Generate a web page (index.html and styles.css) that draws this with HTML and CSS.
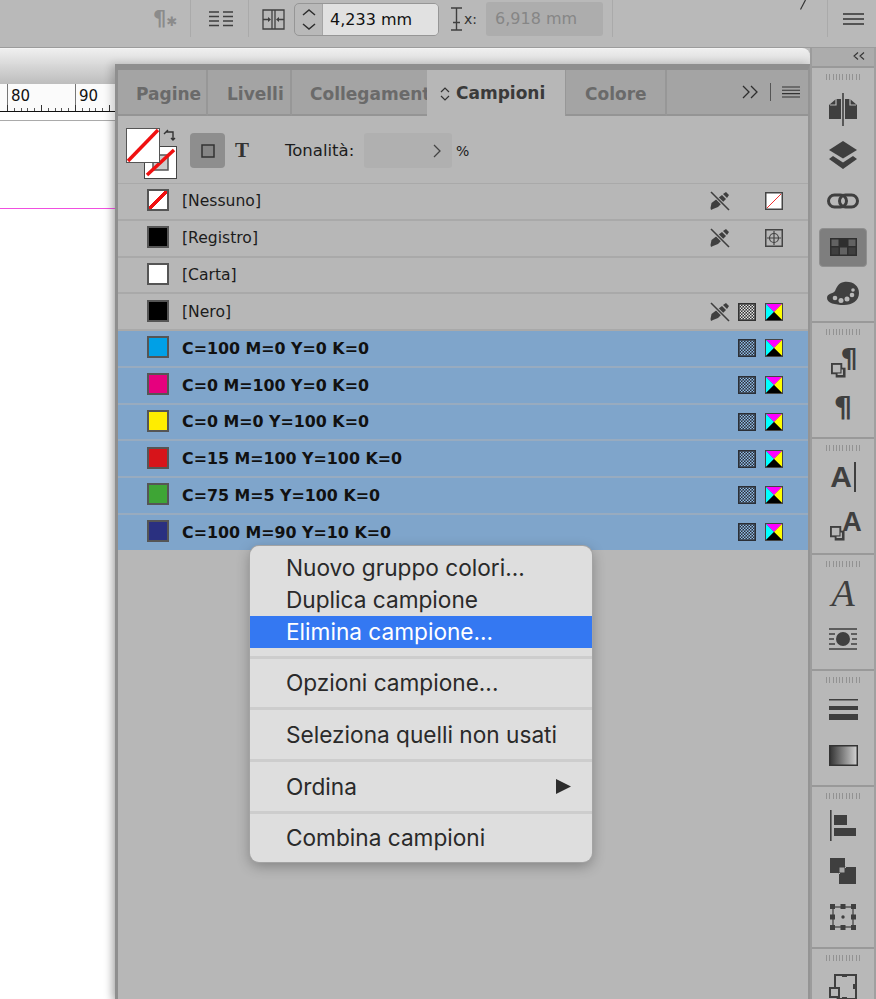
FILE: index.html
```html
<!DOCTYPE html>
<html lang="it">
<head>
  <meta charset="UTF-8" />
  <meta name="viewport" content="width=device-width, initial-scale=1" />
  <title>Campioni</title>
  <link rel="stylesheet" href="styles.css">
</head>
<body>
  <svg class="defs" width="0" height="0">
    <defs>
      <pattern id="dots" width="3" height="3" patternUnits="userSpaceOnUse">
        <rect x="0" y="0" width="1.5" height="1.5" fill="#e6e6e6" />
        <rect x="1.5" y="1.5" width="1.5" height="1.5" fill="#e6e6e6" />
      </pattern>
      <pattern id="dots-sel" width="3" height="3" patternUnits="userSpaceOnUse">
        <rect x="0" y="0" width="1.5" height="1.5" fill="#8fbce8" />
        <rect x="1.5" y="1.5" width="1.5" height="1.5" fill="#8fbce8" />
      </pattern>
      <symbol id="no-edit" viewBox="0 0 20 20">
        <path d="M13 3l3-2 3 3-2 3zM12 4l4 4-8 8-5 2-2 1-.5-2 1-5z" fill="#3f3f3f" />
        <path d="M1 1l18 18" stroke="#b8b8b8" stroke-width="3.4" />
        <path d="M1 1l18 18" stroke="#3f3f3f" stroke-width="1.6" />
      </symbol>
      <symbol id="grid" viewBox="0 0 18 18">
        <rect width="18" height="18" fill="#333" />
        <rect x="1.5" y="1.5" width="15" height="15" fill="url(#dots)" />
      </symbol>
      <symbol id="grid-sel" viewBox="0 0 18 18">
        <rect width="18" height="18" fill="#2b2f36" />
        <rect x="1.5" y="1.5" width="15" height="15" fill="url(#dots-sel)" />
      </symbol>
      <symbol id="cmyk" viewBox="0 0 18 18">
        <rect width="18" height="18" fill="#444" />
        <path d="M1 1h16L9 9z" fill="#f0f" />
        <path d="M1 1v16l8-8z" fill="#0ff" />
        <path d="M17 1v16L9 9z" fill="#ff0" />
        <path d="M1 17h16L9 9z" fill="#000" />
      </symbol>
      <symbol id="overlap" viewBox="0 0 16 16">
        <rect x="5" y="5" width="10.5" height="10.5" fill="#3f3f3f" />
        <rect x="1" y="1" width="10" height="10" fill="#b8b8b8" stroke="#3f3f3f" stroke-width="2" />
        <path d="M12 7v5H7" fill="none" stroke="#b8b8b8" stroke-width="1.5" />
      </symbol>
    </defs>
  </svg>

  <header class="topbar">
    <span class="para-off">¶<i>✱</i></span>
    <span class="sep sep-a"></span>
    <svg class="bar-lines" width="24" height="16" viewBox="0 0 24 16"><path d="M0 1h10M0 5.5h10M0 10h10M0 14.5h10M14 1h10M14 5.5h10M14 10h10M14 14.5h10" stroke="#3f3f3f" stroke-width="1.3" /></svg>
    <span class="sep sep-b"></span>
    <svg class="bar-cols" width="23" height="21" viewBox="0 0 23 21"><path d="M1 1h21v19H1zM10 1v19M13 1v19M1 10.5h6M22 10.5h-6" fill="none" stroke="#3f3f3f" stroke-width="1.3" /><path d="M9 10.5l-3-2.5v5zM14 10.5l3-2.5v5z" fill="#3f3f3f" /></svg>
    <div class="stepper">
      <span class="arrows">
        <svg width="14" height="9" viewBox="0 0 14 9"><path d="M1 7l6-5 6 5" fill="none" stroke="#2e2e2e" stroke-width="1.5" /></svg>
        <svg width="14" height="9" viewBox="0 0 14 9"><path d="M1 2l6 5 6-5" fill="none" stroke="#2e2e2e" stroke-width="1.5" /></svg>
      </span>
      <span class="value">4,233 mm</span>
    </div>
    <svg class="bar-cursor" width="13" height="24" viewBox="0 0 13 24"><path d="M1 1h11M1 23h11M6.5 1v22M3 15.5h7" fill="none" stroke="#3f3f3f" stroke-width="1.4" /></svg>
    <span class="x-label">x:</span>
    <span class="field-off">6,918 mm</span>
    <span class="sep sep-c"></span>
    <svg class="bar-slash" width="6" height="10" viewBox="0 0 6 10"><path d="M5.5 0L.5 9.5" stroke="#333" stroke-width="1.2" /></svg>
    <span class="sep sep-d"></span>
    <svg class="bar-menu" width="21" height="12" viewBox="0 0 21 12"><path d="M0 1h21M0 6h21M0 11h21" stroke="#333" stroke-width="1.4" /></svg>
  </header>

  <div class="workspace">
    <main class="canvas">
      <div class="doc-tab"></div>
      <div class="canvas-row">
        <section class="doc">
          <div class="doc-head"></div>
          <div class="ruler"><span>80</span><span>90</span></div>
          <div class="page-gap"></div>
          <div class="page"><div class="guide"></div></div>
        </section>

        <section class="panel">
          <nav class="tabs">
            <span class="tab tab-pagine">Pagine</span>
            <span class="tab tab-livelli">Livelli</span>
            <span class="tab tab-link">Collegamenti</span>
            <span class="tab tab-active">
              <svg width="10" height="14" viewBox="0 0 10 14"><path d="M1 5l4-4 4 4M1 9l4 4 4-4" fill="none" stroke="#333" stroke-width="1.2" /></svg>
              Campioni
            </span>
            <span class="tab tab-colore">Colore</span>
            <span class="tab-rest">
              <svg width="16" height="14" viewBox="0 0 16 14"><path d="M1 1l6 6-6 6M9 1l6 6-6 6" fill="none" stroke="#2e2e2e" stroke-width="1.3" /></svg>
              <span class="tab-rule"></span>
              <svg width="18" height="12" viewBox="0 0 18 12"><path d="M0 1h18M0 4.3h18M0 7.6h18M0 11h18" stroke="#333" stroke-width="1.1" /></svg>
            </span>
          </nav>

          <div class="controls">
            <svg class="fill-stroke" width="52" height="52" viewBox="0 0 52 52">
              <rect x="18.5" y="18.5" width="32" height="32" fill="#fff" stroke="#444" />
              <rect x="27" y="27" width="15" height="15" fill="#ccc" stroke="#555" stroke-width="1.5" />
              <path d="M21 47l27-25" stroke="#f01010" stroke-width="3.5" />
              <rect x=".5" y=".5" width="33" height="34" fill="#fff" stroke="#555" />
              <path d="M2 33L32 2" stroke="#f01010" stroke-width="3.5" />
              <path d="M40 4h7v8M38 6l2-2 2-2M45 10l2 2 2-2" fill="none" stroke="#333" stroke-width="1.4" />
            </svg>
            <span class="target"><svg width="14" height="14" viewBox="0 0 14 14"><rect x="1" y="1" width="12" height="12" fill="#858585" stroke="#333" stroke-width="1.5" /></svg></span>
            <span class="target-text">T</span>
            <label class="tint-label">Tonalità:</label>
            <span class="tint-field"><svg width="8" height="14" viewBox="0 0 8 14"><path d="M1 1l6 6-6 6" fill="none" stroke="#444" stroke-width="1.3" /></svg></span>
            <span class="percent">%</span>
          </div>

          <ul class="swatches">
            <li class="row">
              <span class="chip chip-none"></span><span class="name">[Nessuno]</span>
              <svg class="mark m-edit"><use href="#no-edit" /></svg>
              <svg class="mark m-last" viewBox="0 0 18 18"><rect x=".75" y=".75" width="16.5" height="16.5" fill="#fff" stroke="#444" stroke-width="1.5" /><path d="M2 16L16 2" stroke="#f03030" stroke-width="1" /></svg>
            </li>
            <li class="row">
              <span class="chip chip-black"></span><span class="name">[Registro]</span>
              <svg class="mark m-edit"><use href="#no-edit" /></svg>
              <svg class="mark m-last" viewBox="0 0 18 18"><rect x=".75" y=".75" width="16.5" height="16.5" fill="none" stroke="#444" stroke-width="1.5" /><circle cx="9" cy="9" r="4.5" fill="none" stroke="#444" stroke-width="1.2" /><path d="M9 2v14M2 9h14" stroke="#444" stroke-width="1.2" /></svg>
            </li>
            <li class="row">
              <span class="chip chip-white"></span><span class="name">[Carta]</span>
            </li>
            <li class="row">
              <span class="chip chip-black"></span><span class="name">[Nero]</span>
              <svg class="mark m-edit"><use href="#no-edit" /></svg>
              <svg class="mark m-grid"><use href="#grid" /></svg>
              <svg class="mark m-cmyk"><use href="#cmyk" /></svg>
            </li>
            <li class="row sel">
              <span class="chip chip-cyan"></span><span class="name">C=100 M=0 Y=0 K=0</span>
              <svg class="mark m-grid"><use href="#grid-sel" /></svg>
              <svg class="mark m-cmyk"><use href="#cmyk" /></svg>
            </li>
            <li class="row sel">
              <span class="chip chip-magenta"></span><span class="name">C=0 M=100 Y=0 K=0</span>
              <svg class="mark m-grid"><use href="#grid-sel" /></svg>
              <svg class="mark m-cmyk"><use href="#cmyk" /></svg>
            </li>
            <li class="row sel">
              <span class="chip chip-yellow"></span><span class="name">C=0 M=0 Y=100 K=0</span>
              <svg class="mark m-grid"><use href="#grid-sel" /></svg>
              <svg class="mark m-cmyk"><use href="#cmyk" /></svg>
            </li>
            <li class="row sel">
              <span class="chip chip-red"></span><span class="name">C=15 M=100 Y=100 K=0</span>
              <svg class="mark m-grid"><use href="#grid-sel" /></svg>
              <svg class="mark m-cmyk"><use href="#cmyk" /></svg>
            </li>
            <li class="row sel">
              <span class="chip chip-green"></span><span class="name">C=75 M=5 Y=100 K=0</span>
              <svg class="mark m-grid"><use href="#grid-sel" /></svg>
              <svg class="mark m-cmyk"><use href="#cmyk" /></svg>
            </li>
            <li class="row sel">
              <span class="chip chip-navy"></span><span class="name">C=100 M=90 Y=10 K=0</span>
              <svg class="mark m-grid"><use href="#grid-sel" /></svg>
              <svg class="mark m-cmyk"><use href="#cmyk" /></svg>
            </li>
          </ul>
        </section>
      </div>
    </main>

    <aside class="dock">
      <div class="dock-head">
        <svg width="12" height="8" viewBox="0 0 12 8"><path d="M5 .5L1 4l4 3.5M11 .5L7 4l4 3.5" fill="none" stroke="#333" stroke-width="1.1" /></svg>
      </div>

      <div class="group group-first">
        <div class="grip"></div>
        <div class="tool">
          <svg width="30" height="33" viewBox="0 0 30 33"><path d="M13 6H8L1 12v14h12zM17 6h5l7 6v14H17z" fill="#3f3f3f" /><path d="M8 6v6H2M22 6v6h6" fill="none" stroke="#b8b8b8" stroke-width="1.2" /><path d="M15 0v33" stroke="#3f3f3f" stroke-width="1.6" /></svg>
        </div>
        <div class="tool">
          <svg width="28" height="29" viewBox="0 0 28 29"><path d="M14 0l14 9-14 8.5L0 9z" fill="#3f3f3f" /><path d="M4 15l10 6.5L24 15l4 3-14 10L0 18z" fill="#3f3f3f" /></svg>
        </div>
        <div class="tool">
          <svg width="32" height="16" viewBox="0 0 32 16"><rect x="1.5" y="2" width="18" height="12" rx="6" fill="none" stroke="#3f3f3f" stroke-width="3" /><rect x="12.5" y="2" width="18" height="12" rx="6" fill="none" stroke="#3f3f3f" stroke-width="3" /></svg>
        </div>
        <div class="tool tool-on">
          <span class="tool-box">
            <svg width="27" height="18" viewBox="0 0 27 18"><rect width="27" height="18" fill="#2f2f2f" /><rect x="1.5" y="1.5" width="7" height="6.5" fill="#626262" /><rect x="18.5" y="1.5" width="7" height="6.5" fill="#626262" /><rect x="10" y="9.5" width="7" height="7" fill="#626262" /><rect x="1.5" y="9.5" width="7" height="7" fill="#3f3f3f" /><rect x="18.5" y="9.5" width="7" height="7" fill="#3f3f3f" /></svg>
          </span>
        </div>
        <div class="tool">
          <svg width="32" height="24" viewBox="0 0 32 24"><path d="M17 1c9-1 15 4 15 11 0 8-7 12-15 12C8 24 0 22 0 17c0-5 6-4 8-7 2-4 3-8 9-9z" fill="#3f3f3f" /><circle cx="8" cy="17" r="2.3" fill="#b8b8b8" /><circle cx="14" cy="19.5" r="2.5" fill="#b8b8b8" /><circle cx="20" cy="18" r="2.5" fill="#b8b8b8" /><circle cx="25" cy="14" r="2.3" fill="#b8b8b8" /><circle cx="26" cy="9" r="1.8" fill="#b8b8b8" /></svg>
        </div>
      </div>

      <div class="group">
        <div class="grip"></div>
        <div class="tool">
          <span class="tool-pair"><svg width="15" height="15"><use href="#overlap" /></svg><span class="glyph-para glyph-para-up">¶</span></span>
        </div>
        <div class="tool"><span class="glyph-para">¶</span></div>
      </div>

      <div class="group">
        <div class="grip"></div>
        <div class="tool"><span class="glyph-a">A</span><span class="caret"></span></div>
        <div class="tool">
          <span class="tool-pair tool-pair-a"><svg width="15" height="15"><use href="#overlap" /></svg><span class="glyph-a glyph-a-up">A</span></span>
        </div>
      </div>

      <div class="group">
        <div class="grip"></div>
        <div class="tool"><span class="glyph-script">A</span></div>
        <div class="tool">
          <svg width="28" height="22" viewBox="0 0 28 22"><path d="M0 1h28M0 21h28M0 6h6M0 11h5M0 16h6M22 6h6M23 11h5M22 16h6" stroke="#3f3f3f" stroke-width="1.5" /><circle cx="14" cy="11" r="7" fill="#3f3f3f" /></svg>
        </div>
      </div>

      <div class="group">
        <div class="grip"></div>
        <div class="tool">
          <svg width="29" height="21" viewBox="0 0 29 21"><rect y="0" width="29" height="1.5" fill="#3f3f3f" /><rect y="7" width="29" height="4" fill="#3f3f3f" /><rect y="15" width="29" height="6" fill="#3f3f3f" /></svg>
        </div>
        <div class="tool">
          <svg width="29" height="21" viewBox="0 0 29 21"><defs><linearGradient id="fade"><stop offset="0" stop-color="#333" /><stop offset="1" stop-color="#d4d4d4" /></linearGradient></defs><rect x=".75" y=".75" width="27.5" height="19.5" fill="url(#fade)" stroke="#333" stroke-width="1.5" /></svg>
        </div>
      </div>

      <div class="group">
        <div class="grip"></div>
        <div class="tool">
          <svg width="26" height="31" viewBox="0 0 26 31"><rect width="1.6" height="31" fill="#3f3f3f" /><rect x="4" y="5" width="13" height="10" fill="#3f3f3f" /><rect x="4" y="18" width="22" height="8" fill="#3f3f3f" /></svg>
        </div>
        <div class="tool">
          <svg width="26" height="26" viewBox="0 0 26 26"><rect x="0" y="0" width="15" height="15" fill="#3f3f3f" /><rect x="9" y="9" width="17" height="17" fill="#3f3f3f" /><rect x="9" y="9" width="6" height="6" fill="#a8a8a8" stroke="#3f3f3f" /><path d="M15 9.5h1M9.5 15v1" stroke="#b8b8b8" /></svg>
        </div>
        <div class="tool">
          <svg width="26" height="26" viewBox="0 0 26 26"><rect x="3" y="3" width="20" height="20" fill="none" stroke="#3f3f3f" stroke-width="1.2" /><path d="M0 0h5v5H0zM10.5 0h5v5h-5zM21 0h5v5h-5zM0 10.5h5v5H0zM21 10.5h5v5h-5zM0 21h5v5H0zM10.5 21h5v5h-5zM21 21h5v5h-5z" fill="#3f3f3f" /><circle cx="13" cy="13" r="1.7" fill="#3f3f3f" /></svg>
        </div>
      </div>

      <div class="group">
        <div class="grip"></div>
        <div class="tool">
          <svg width="28" height="26" viewBox="0 0 28 26"><path d="M6 1h21v24H9l-3-6z" fill="#b8b8b8" stroke="#3f3f3f" stroke-width="2" /><path d="M13 0h5v3h-5zM24 10h4v5h-4zM13 23h5v3h-5z" fill="#3f3f3f" /><rect x="1" y="14" width="9" height="9" fill="#b8b8b8" stroke="#3f3f3f" stroke-width="2" /></svg>
        </div>
      </div>
    </aside>
  </div>

  <!-- menu contestuale sopra il pannello -->
  <div class="menu">
    <div class="item">Nuovo gruppo colori...</div>
    <div class="item">Duplica campione</div>
    <div class="item item-on">Elimina campione...</div>
    <div class="divider"></div>
    <div class="item">Opzioni campione...</div>
    <div class="divider"></div>
    <div class="item">Seleziona quelli non usati</div>
    <div class="divider"></div>
    <div class="item item-sub">Ordina <svg width="15" height="15" viewBox="0 0 15 15"><path d="M0 0l15 7.5L0 15z" fill="#2c2c2c" /></svg></div>
    <div class="divider"></div>
    <div class="item">Combina campioni</div>
  </div>
</body>
</html>
```

FILE: styles.css
```css
* {
  box-sizing: border-box;
}
html, body {
  margin: 0;
  height: 999px;
  overflow: hidden;
}
body {
  position: relative;
  background: #b8b8b8;
  font-family: "DejaVu Sans", sans-serif;
  color: #1c1c1c;
}
.defs {
  display: block;
  height: 0;
}

/* barra in alto */
.topbar {
  display: flex;
  align-items: center;
  height: 48px;
  padding: 0 14px 9px 153px;
  background: #b9b9b9;
  border-bottom: 1px solid #9c9c9c;
}
.topbar > * {
  flex-shrink: 0;
}
.para-off {
  width: 27px;
  font-size: 21px;
  font-weight: bold;
  color: #8b8b8b;
}
.para-off i {
  font-style: normal;
  font-size: 13px;
}
.sep {
  width: 1px;
  height: 37px;
  margin-top: -1px;
  background: #aaa;
}
.sep-a { margin-left: 10px; }
.bar-lines { margin-left: 18px; }
.sep-b { margin-left: 15px; }
.bar-cols { margin-left: 13px; }
.stepper {
  display: flex;
  width: 145px;
  height: 33px;
  margin-left: 9px;
  border: 1px solid #969696;
  border-radius: 5px;
  overflow: hidden;
}
.arrows {
  display: flex;
  flex-direction: column;
  align-items: center;
  justify-content: center;
  gap: 5px;
  width: 28px;
  border-right: 1px solid #a5a5a5;
}
.value {
  flex: 1;
  padding-left: 7px;
  background: #e1e1e1;
  font-size: 16px;
  line-height: 31px;
  color: #111;
}
.bar-cursor { margin-left: 11px; }
.x-label {
  margin-left: 1px;
  width: 22px;
  font-size: 14px;
  color: #333;
}
.field-off {
  width: 117px;
  height: 34px;
  padding-left: 9px;
  background: #adadad;
  border-radius: 3px;
  font-size: 16px;
  line-height: 34px;
  color: #868686;
}
.sep-c { margin-left: 9px; }
.bar-slash {
  align-self: flex-start;
  margin-left: 187px;
}
.sep-d { margin-left: 21px; }
.bar-menu { margin-left: 15px; }

.workspace {
  display: flex;
  height: 951px;
}
.canvas {
  display: flex;
  flex-direction: column;
  width: 810px;
  flex-shrink: 0;
}
.doc-tab {
  height: 16px;
  flex-shrink: 0;
  background: linear-gradient(#efefef, #dadada);
  border-top: 1px solid #f4f4f4;
  border-radius: 0 8px 0 0;
}
.canvas-row {
  display: flex;
  flex: 1;
  min-height: 0;
}

/* documento */
.doc {
  width: 115px;
  flex-shrink: 0;
  display: flex;
  flex-direction: column;
}
.doc-head {
  height: 20px;
  background: linear-gradient(#d9d9d9, #bdbdbd);
}
.ruler {
  display: flex;
  height: 28px;
  padding-left: 7px;
  background-color: #fbfbfb;
  background-image:
    repeating-linear-gradient(90deg, #333 0, #333 1px, transparent 1px, transparent 34px),
    repeating-linear-gradient(90deg, #555 0, #555 1px, transparent 1px, transparent 6.8px);
  background-size: 100% 6px, 100% 3px;
  background-position: 7px 21px, 7px 24px;
  background-repeat: no-repeat;
  border-bottom: 1px solid #111;
}
.ruler span {
  flex-shrink: 0;
  width: 68px;
  height: 21px;
  padding-left: 3px;
  border-left: 1px solid #777;
  font-size: 15px;
  line-height: 24px;
  color: #111;
}
.page-gap {
  height: 9px;
  background: #fff;
  border-bottom: 1px solid #aaa;
}
.page {
  flex: 1;
  background: #fff;
  padding-top: 87px;
  box-shadow: inset -8px 0 8px -8px rgba(0, 0, 0, .25);
}
.guide {
  height: 1px;
  background: #f04fe0;
}

/* pannello */
.panel {
  flex: 1;
  min-width: 0;
  display: flex;
  flex-direction: column;
  background: #b7b7b7;
  border-top: 6px solid #8f8f8f;
  border-left: 3px solid #8f8f8f;
  border-right: 2px solid #949494;
  box-shadow: -4px 0 8px rgba(0, 0, 0, .18);
}
.tabs {
  display: flex;
  height: 46px;
  flex-shrink: 0;
  background: #a4a4a4;
  font-size: 17px;
  font-weight: bold;
  line-height: 49px;
  color: #6a6a6a;
}
.tab {
  flex-shrink: 0;
  padding-left: 18px;
  border-right: 2px solid #979797;
  border-bottom: 2px solid #949494;
  overflow: hidden;
  white-space: nowrap;
}
.tab-pagine { width: 90px; }
.tab-livelli { width: 84px; padding-left: 19px; }
.tab-link { width: 135px; border-right: 0; }
.tab-active {
  display: flex;
  align-items: center;
  gap: 6px;
  width: 139px;
  padding: 1px 0 0 13px;
  background: #b7b7b7;
  color: #3a3a3a;
  border-bottom: 0;
  border-right: 1px solid #979797;
}
.tab-colore { width: 101px; padding-left: 19px; }
.tab-rest {
  flex: 1;
  display: flex;
  align-items: center;
  padding: 0 9px 0 75px;
  border-bottom: 2px solid #949494;
}
.tab-rule {
  width: 1px;
  height: 18px;
  margin: 0 11px 0 12px;
  background: #555;
}
.controls {
  display: flex;
  align-items: center;
  height: 67px;
  padding: 2px 0 0 8px;
  flex-shrink: 0;
}
.fill-stroke {
  margin-top: 6px;
  width: 52px;
  height: 52px;
}
.target {
  display: flex;
  align-items: center;
  justify-content: center;
  width: 35px;
  height: 35px;
  margin-left: 12px;
  background: #8e8e8e;
  border-radius: 4px;
}
.target-text {
  width: 50px;
  margin-left: 10px;
  font-family: "Liberation Serif", serif;
  font-weight: bold;
  font-size: 21px;
  color: #333;
}
.tint-label {
  width: 79px;
  font-size: 16.5px;
  color: #1c1c1c;
}
.tint-field {
  display: flex;
  align-items: center;
  justify-content: flex-end;
  width: 88px;
  height: 35px;
  padding-right: 11px;
  background: #b0b0b0;
  border-radius: 3px;
}
.percent {
  margin-left: 4px;
  font-size: 14px;
}

/* lista campioni */
.swatches {
  list-style: none;
  margin: 0;
  padding: 0;
  border-top: 1px solid #a9a9a9;
}
.row {
  display: flex;
  align-items: center;
  height: 36.75px;
  padding-left: 29px;
  border-bottom: 2px solid #a9a9a9;
  font-size: 15.6px;
}
.row.sel {
  background: #7fa5cb;
  border-bottom-color: #98abbf;
  font-size: 15.85px;
  font-weight: bold;
  color: #111;
}
.row:last-child {
  height: 35px;
  border-bottom: 0;
}
.chip {
  width: 22px;
  height: 22px;
  flex-shrink: 0;
  margin-top: -2px;
  border: 2px solid #555;
}
.chip-black { background: #000; }
.chip-white { background: #fff; }
.chip-none { background: linear-gradient(135deg, #fff 43%, #f01010 43%, #f01010 57%, #fff 57%); }
.chip-cyan { background: #00a0e6; }
.chip-magenta { background: #e6007e; }
.chip-yellow { background: #ffed00; }
.chip-red { background: #d7141a; }
.chip-green { background: #3ea535; }
.chip-navy { background: #2a3080; }
.name {
  margin-left: 13px;
  flex: 1;
  white-space: nowrap;
}
.mark {
  flex-shrink: 0;
  width: 18px;
  height: 18px;
}
.m-edit { width: 20px; height: 20px; }
.m-grid { margin-left: 8px; }
.m-cmyk { margin-left: 9px; margin-right: 25px; }
.m-last { margin-left: 35px; margin-right: 25px; }

/* dock a destra */
.dock {
  width: 66px;
  display: flex;
  flex-direction: column;
  background: #b8b8b8;
  border-left: 2px solid #9c9c9c;
  border-right: 2px solid #a0a0a0;
}
.dock-head {
  display: flex;
  align-items: center;
  justify-content: flex-end;
  flex-shrink: 0;
  height: 20px;
  padding: 2px 9px 4px 0;
  background: #acacac;
  border-bottom: 2px solid #999;
}
.group {
  padding-top: 6px;
  padding-bottom: 7px;
  border-bottom: 2px solid #999;
  flex-shrink: 0;
}
.group-first {
  padding-top: 9px;
  padding-bottom: 5px;
}
.grip {
  height: 6px;
  margin: 0 14px 3px;
  background: repeating-linear-gradient(90deg, #929292 0, #929292 1px, transparent 1px, transparent 3.3px);
}
.group-first .grip {
  margin-top: -3px;
  margin-bottom: 6px;
}
.tool {
  display: flex;
  align-items: center;
  justify-content: center;
  height: 46px;
}
.tool-box {
  display: flex;
  align-items: center;
  justify-content: center;
  width: 48px;
  height: 39px;
  background: #7e7e7e;
  border: 1px solid #8f8f8f;
  border-radius: 4px;
}
.tool-pair {
  display: flex;
  align-items: flex-end;
  margin-left: 3px;
}
.tool-pair-a {
  margin: 2px 0 0 6px;
}
.glyph-para {
  font-size: 29px;
  font-weight: bold;
  line-height: 30px;
  color: #3f3f3f;
}
.glyph-para-up {
  margin: 0 0 4px -6px;
  font-size: 27px;
}
.glyph-a {
  font-family: "Liberation Sans", sans-serif;
  font-size: 30px;
  font-weight: bold;
  line-height: 30px;
  color: #3f3f3f;
}
.glyph-a-up {
  margin: 0 0 4px -3px;
  font-size: 27px;
}
.caret {
  width: 2px;
  height: 30px;
  margin-left: 2px;
  background: #3f3f3f;
}
.glyph-script {
  font-family: "Liberation Serif", serif;
  font-style: italic;
  font-size: 38px;
  line-height: 34px;
  color: #3f3f3f;
}

/* menu contestuale */
.menu {
  position: absolute;
  left: 250px;
  top: 546px;
  width: 342px;
  height: 316px;
  padding: 6px 0 7px;
  background: #dedede;
  border-radius: 9px;
  box-shadow: 0 0 0 1px #a3a3a3, 0 4px 14px rgba(0, 0, 0, .3);
  font-family: Inter, sans-serif;
  font-size: 22.65px;
  color: #2a2a2a;
}
.item {
  height: 32px;
  padding-left: 36px;
  line-height: 32px;
  white-space: nowrap;
}
.item-on {
  height: 31.5px;
  background: #3478f2;
  color: #fff;
}
.item-sub {
  display: flex;
  align-items: center;
  justify-content: space-between;
  padding-right: 21px;
}
.divider {
  height: 19.7px;
  background: linear-gradient(#cdcdcd, #cdcdcd) no-repeat 0 8px / 100% 3px;
}
```
